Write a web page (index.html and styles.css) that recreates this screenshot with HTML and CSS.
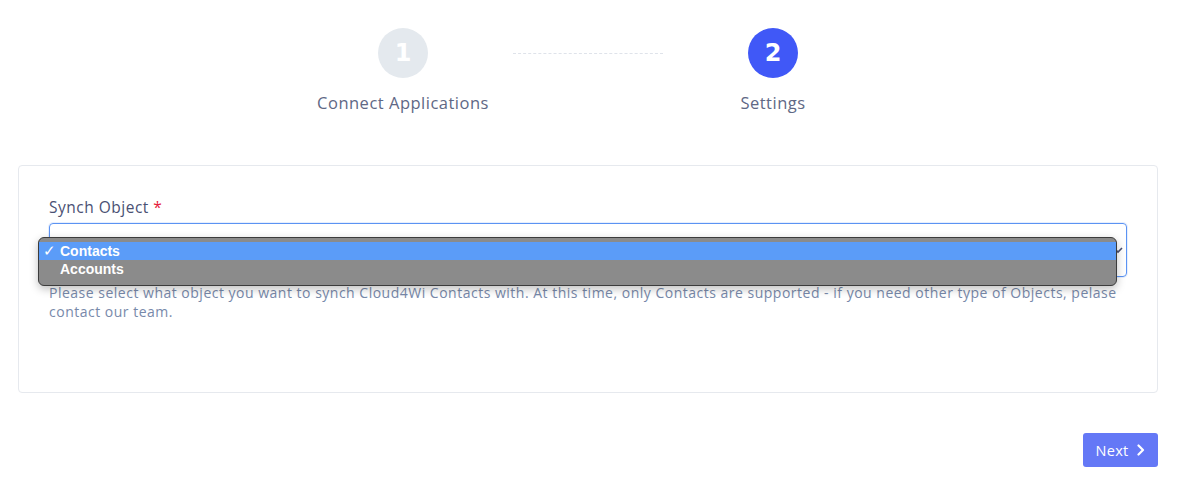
FILE: index.html
```html
<!DOCTYPE html>
<html>
<head>
<meta charset="utf-8">
<link rel="stylesheet" href="styles.css">
</head>
<body>
<div class="page">
  <div class="stepper">
    <div class="step">
      <div class="circle done">1</div>
      <div class="step-label">Connect Applications</div>
    </div>
    <div class="connector"></div>
    <div class="step">
      <div class="circle active">2</div>
      <div class="step-label">Settings</div>
    </div>
  </div>

  <div class="card">
    <label class="field-label">Synch Object <span class="req">*</span></label>
    <div class="select-wrap">
      <div class="select">
        <svg class="select-chev" width="10" height="8" viewBox="0 0 10 8"><path d="M1 2 L5 6 L9 2" fill="none" stroke="#4a5073" stroke-width="1.6"/></svg>
      </div>
      <div class="dropdown">
        <div class="opt selected"><span class="check">✓</span>Contacts</div>
        <div class="opt">Accounts</div>
      </div>
    </div>
    <p class="help">Please select what object you want to synch Cloud4Wi Contacts with. At this time, only Contacts are supported - if you need other type of Objects, pelase contact our team.</p>
  </div>

  <div class="actions">
    <button class="btn-next">Next
      <svg width="10" height="12" viewBox="0 0 10 12"><path d="M2.5 1.5 L7 6 L2.5 10.5" fill="none" stroke="#fff" stroke-width="2.2" stroke-linecap="round" stroke-linejoin="round"/></svg>
    </button>
  </div>
</div>
</body>
</html>
```

FILE: styles.css
```css
* { box-sizing: border-box; }
html, body { margin: 0; padding: 0; background: #fff; }
body {
  font-family: "Open Sans", "DejaVu Sans", sans-serif;
  color: #4a5073;
}
.page {
  padding: 28px 20px 0 18px;
}
.stepper {
  display: flex;
  justify-content: center;
  align-items: flex-start;
}
.step {
  width: 220px;
  display: flex;
  flex-direction: column;
  align-items: center;
}
.circle {
  width: 50px;
  height: 50px;
  border-radius: 50%;
  display: flex;
  align-items: center;
  justify-content: center;
  color: #fff;
  font-family: "DejaVu Sans", sans-serif;
  font-weight: 700;
  font-size: 24px;
}
.circle.done { background: #e4e9ee; }
.circle.active { background: #4058f7; }
.step-label {
  margin-top: 14px;
  font-size: 16.5px;
  color: #606885;
  letter-spacing: 0.5px;
  line-height: 22px;
}
.connector {
  width: 150px;
  margin-top: 25px;
  border-top: 1px dashed #dfe3ea;
}
.card {
  margin-top: 51px;
  border: 1px solid #e6e9ee;
  border-radius: 4px;
  height: 228px;
  padding: 30px 30px 0 30px;
}
.field-label {
  display: block;
  font-size: 15.5px;
  line-height: 22px;
  color: #4a5073;
  letter-spacing: 0.5px;
}
.req { color: #e5223c; }
.select-wrap {
  position: relative;
  margin-top: 5px;
}
.select {
  height: 54px;
  border: 1px solid #5b93f3;
  border-radius: 4px;
  box-shadow: 0 0 0 1px rgba(91,147,243,0.15);
  position: relative;
}
.select-chev {
  position: absolute;
  right: 3px;
  top: 22px;
}
.dropdown {
  position: absolute;
  left: -11px;
  top: 14px;
  width: 1079px;
  height: 49px;
  background: #8b8b8b;
  border: 1px solid #3c3c3c;
  border-radius: 6px;
  padding-top: 4px;
  box-shadow: 0 3px 8px rgba(0,0,0,0.25);
  font-family: "Liberation Sans", Arial, sans-serif;
  font-size: 14px;
  font-weight: 700;
  color: #fff;
}
.opt {
  height: 19px;
  line-height: 19px;
  padding-left: 21px;
  position: relative;
}
.opt.selected { background: #5b9cf8; height: 18px; line-height: 18px; }
.check {
  position: absolute;
  left: 4px;
  font-size: 15px;
  font-weight: 400;
}
.help {
  margin: 6px 0 0 0;
  font-size: 14px;
  line-height: 19px;
  letter-spacing: 0.5px;
  color: #7889aa;
}
.actions {
  display: flex;
  justify-content: flex-end;
  margin-top: 40px;
}
.btn-next {
  width: 75px;
  height: 34px;
  background: #6478f6;
  border: none;
  border-radius: 3px;
  color: #fff;
  font-family: "Open Sans", sans-serif;
  font-size: 14.5px;
  font-weight: 500;
  letter-spacing: 0.3px;
  display: flex;
  align-items: center;
  justify-content: center;
  gap: 7px;
  padding: 0;
}
```
